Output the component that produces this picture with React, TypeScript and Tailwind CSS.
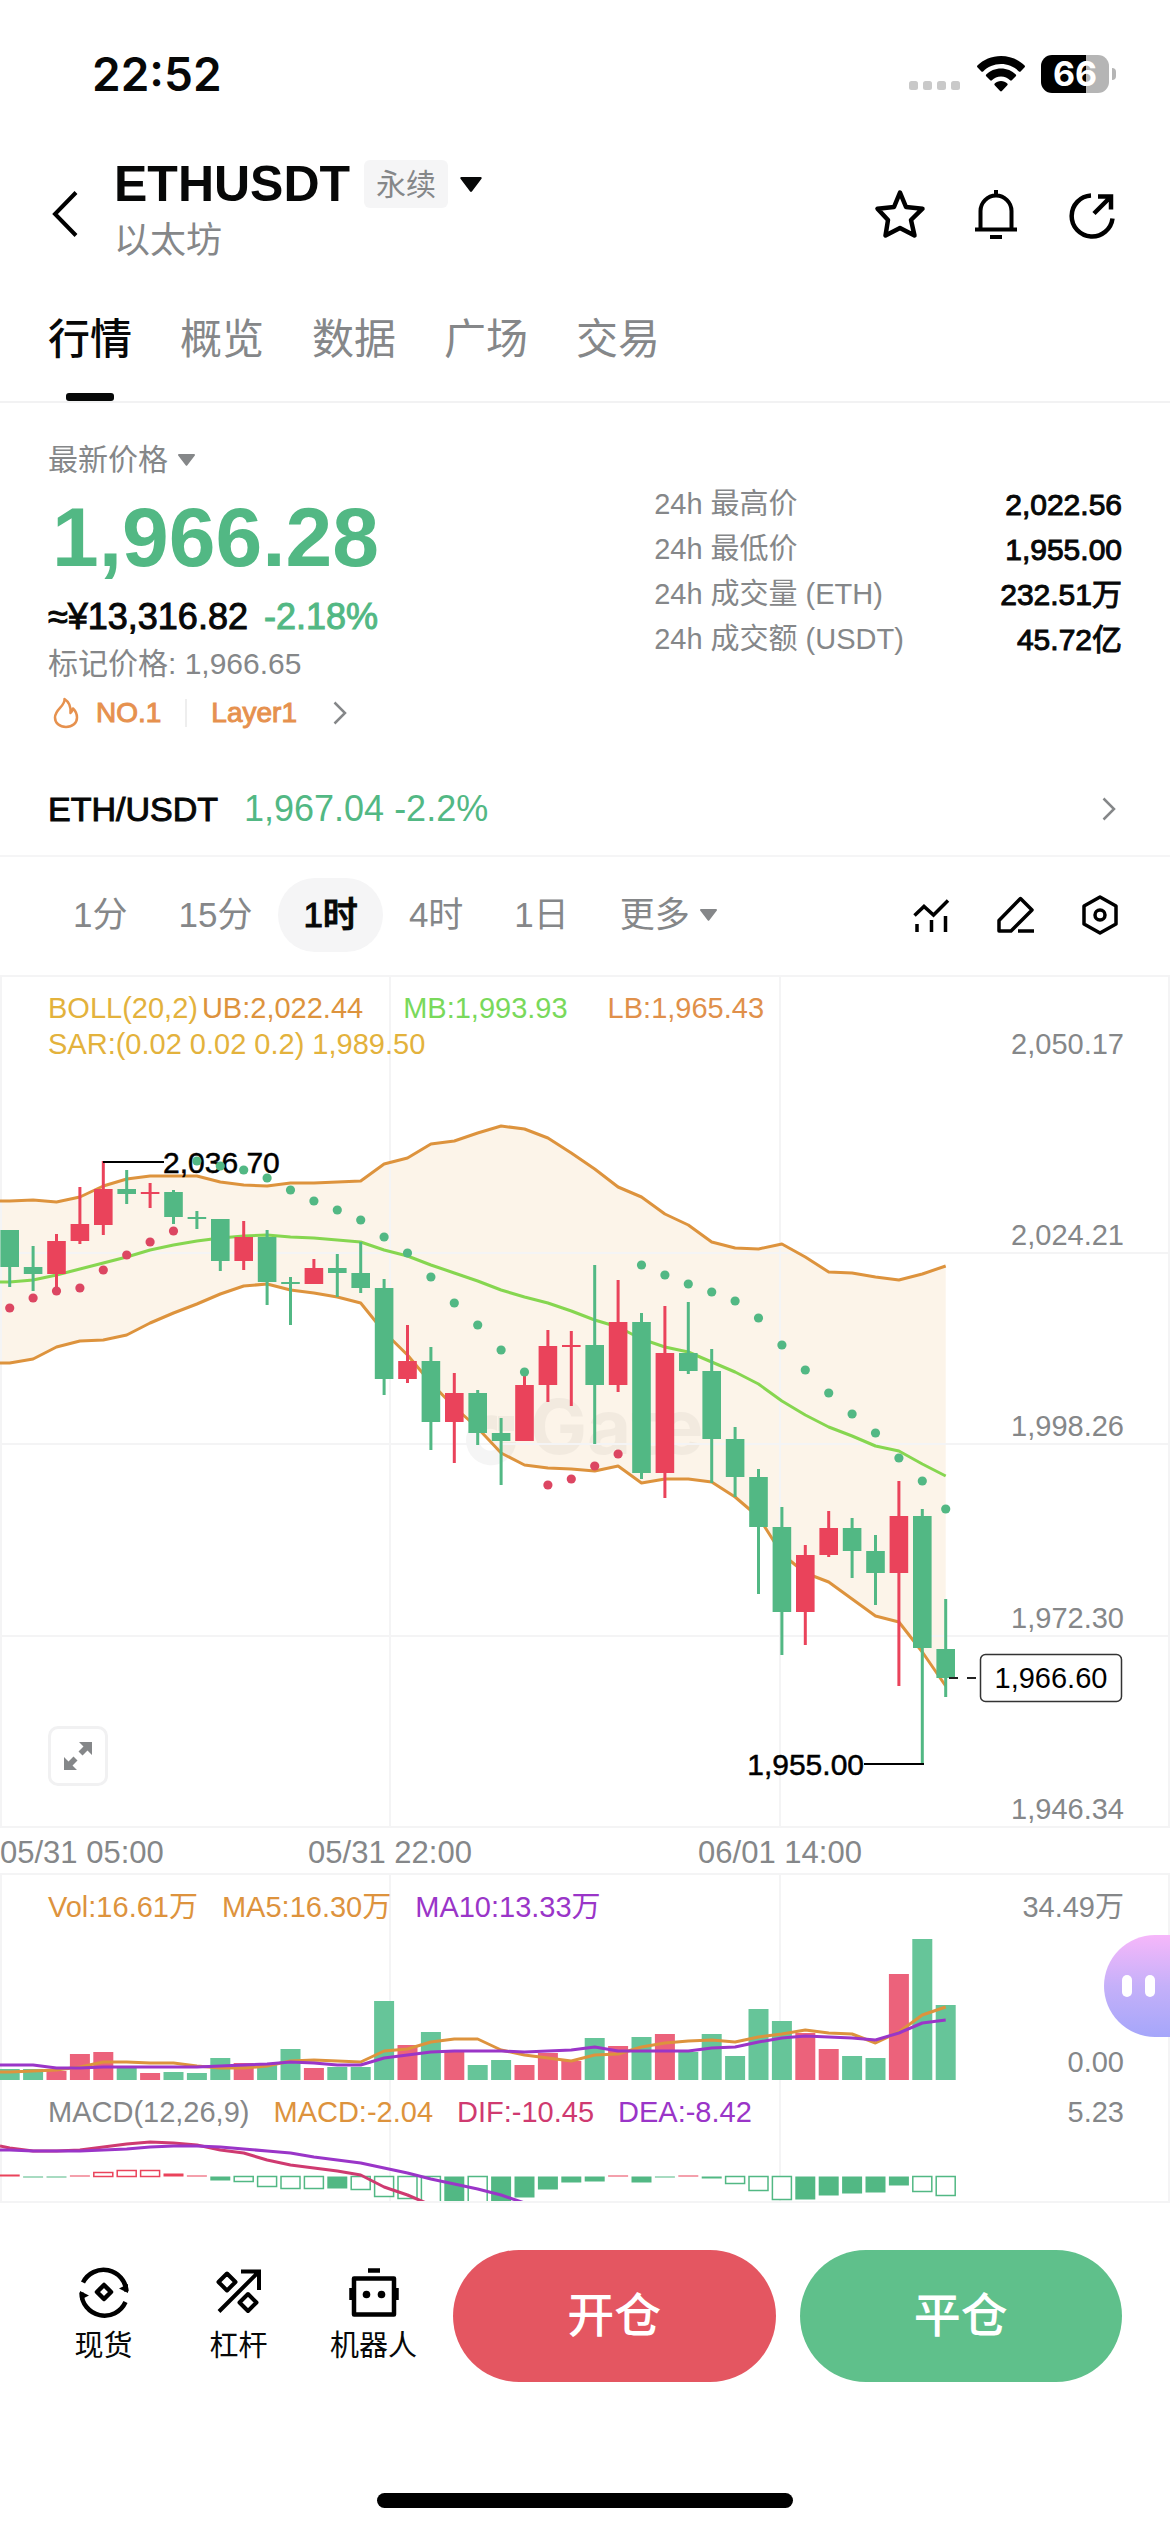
import React, { useState } from 'react';

const GREEN = '#52b884';
const RED = '#ea435b';
const ORANGE = '#dd933d';
const PURPLE = '#9a35c8';
const GRID = '#f4f4f5';

const STEP = 23.4;
const xAt = (i: number) => 9.7 + STEP * i;

type Side = 'g' | 'r';

// side, body top, body bottom, wick top, wick bottom
const candles: [Side, number, number, number, number][] = [
  ['g', 255, 292, 255, 312], ['g', 292, 299, 271, 316], ['r', 266, 299, 259, 316], ['r', 249, 266, 212, 269],
  ['r', 214, 250, 186, 260], ['g', 214, 219, 195, 229], ['r', 217, 219, 208, 233], ['g', 217, 242, 215, 249],
  ['g', 242, 244, 236, 254], ['g', 244, 286, 244, 296], ['r', 262, 286, 246, 295], ['g', 262, 307, 255, 330],
  ['g', 307, 309, 302, 350], ['r', 293, 309, 284, 309], ['g', 293, 298, 279, 322], ['g', 298, 313, 267, 318],
  ['g', 313, 404, 304, 420], ['r', 386, 404, 350, 408], ['g', 386, 447, 372, 475], ['r', 418, 447, 398, 488],
  ['g', 418, 458, 415, 470], ['g', 458, 466, 443, 510], ['r', 410, 466, 401, 466], ['r', 371, 410, 355, 427],
  ['r', 370, 372, 356, 431], ['g', 370, 410, 290, 469], ['r', 347, 410, 305, 417], ['g', 347, 498, 338, 504],
  ['r', 378, 498, 331, 523], ['g', 378, 396, 327, 399], ['g', 396, 464, 374, 508], ['g', 464, 502, 452, 522],
  ['g', 502, 552, 494, 619], ['g', 552, 637, 532, 680], ['r', 580, 637, 570, 670], ['r', 553, 580, 536, 582],
  ['g', 553, 576, 543, 603], ['g', 576, 598, 560, 630], ['r', 541, 598, 506, 711], ['g', 541, 673, 534, 788],
  ['g', 674, 703, 624, 722],
];

const bollUpper = [
  226, 225, 227, 222, 211, 204, 201, 201, 201, 207, 210, 211, 208, 208, 207, 206, 189, 183, 169, 166, 158,
  151, 154, 163, 178, 194, 212, 222, 239, 250, 267, 273, 274, 269, 282, 297, 298, 302, 305, 299, 291,
];
const bollMiddle = [
  307, 305, 300, 294, 288, 282, 275, 270, 266, 263, 261, 260, 262, 263, 265, 267, 275, 281, 290, 298, 306,
  315, 322, 328, 336, 345, 352, 364, 372, 377, 387, 397, 409, 426, 440, 452, 461, 471, 476, 489, 501,
];
const bollLower = [
  388, 384, 372, 366, 365, 360, 348, 338, 329, 319, 311, 309, 315, 318, 322, 328, 357, 380, 408, 432, 453,
  478, 490, 493, 494, 496, 491, 508, 504, 504, 507, 522, 542, 579, 598, 607, 624, 641, 647, 677, 711,
];
const sar = [
  333, 323, 316, 313, 295, 280, 267, 256, 186, 191, 195, 203, 215, 226, 235, 245, 262, 278, 302, 328, 350,
  375, 397, 510, 504, 491, 479, 290, 300, 309, 317, 326, 343, 370, 395, 418, 439, 458, 483, 506, 534,
];
const isSarRed = (i: number) => i < 8 || (i > 22 && i < 27);

const volumes = [
  11, 11, 9, 26, 28, 12, 7, 8, 7, 22, 17, 15, 31, 12, 13, 13, 79, 35, 48, 28, 15,
  20, 15, 27, 19, 42, 34, 43, 46, 28, 46, 24, 71, 59, 47, 31, 24, 22, 106, 141, 75,
];
const volMa5 = [
  197, 196, 195, 192, 187, 187, 188, 188, 191, 193, 193, 191, 186, 185, 186, 187, 176, 174, 167, 164, 164,
  175, 180, 183, 186, 180, 179, 172, 168, 166, 165, 167, 162, 159, 155, 158, 159, 168, 157, 140, 132,
];
const volMa10 = [
  190, 190, 193, 193, 192, 192, 192, 192, 192, 191, 190, 189, 187, 188, 190, 190, 183, 180, 177, 176, 176,
  176, 177, 176, 175, 172, 176, 176, 176, 176, 173, 172, 167, 163, 161, 162, 163, 165, 158, 148, 145,
];

// side, bar height, hollow
const macdBars: [Side, number, boolean][] = [
  ['r', 2, false], ['g', 1, false], ['g', 1, false], ['r', 1, false], ['r', 4, true], ['r', 6, true],
  ['r', 6, true], ['r', 3, false], ['r', 1, false], ['g', 4, false], ['g', 5, true], ['g', 10, true],
  ['g', 12, true], ['g', 12, true], ['g', 12, false], ['g', 13, true], ['g', 20, true], ['g', 22, true],
  ['g', 32, true], ['g', 32, false], ['g', 32, true], ['g', 32, false], ['g', 21, false], ['g', 13, false],
  ['g', 6, false], ['g', 5, false], ['r', 1, false], ['g', 6, false], ['g', 1, false], ['r', 1, false],
  ['g', 2, false], ['g', 7, true], ['g', 14, true], ['g', 23, true], ['g', 23, false], ['g', 19, false],
  ['g', 17, false], ['g', 16, false], ['g', 9, false], ['g', 15, true], ['g', 19, true],
];
const dif = [68, 71, 71, 70, 67, 64, 62, 63, 65, 70, 73, 80, 85, 88, 91, 95, 107, 115, 125];
const dea = [70, 71, 71, 71, 70, 69, 67, 66, 66, 67, 69, 71, 73, 77, 80, 83, 88, 93, 99, 104, 109, 115, 123];

const toPoints = (values: number[], first = values[0]) =>
  [`0,${first}`, ...values.map((y, i) => `${xAt(i)},${y}`)].join(' ');

const bandPoints = [
  toPoints(bollUpper),
  ...bollLower.map((y, i) => `${xAt(i)},${y}`).reverse(),
  `0,${bollLower[0]}`,
].join(' ');

const colorOf = (side: Side) => (side === 'g' ? GREEN : RED);

const GridColumns: React.FC<{ height: number }> = ({ height }) => (
  <g stroke={GRID} strokeWidth="2">
    {[1, 390, 780, 1169].map((x) => (
      <line key={x} x1={x} x2={x} y1="0" y2={height} />
    ))}
  </g>
);

const AxisLabel: React.FC<{ y: number; children: React.ReactNode }> = ({ y, children }) => (
  <text x="1124" y={y} textAnchor="end" dominantBaseline="central" className="fill-[#858789] text-[29px]">
    {children}
  </text>
);

const CaretDown: React.FC<{ className: string }> = ({ className }) => (
  <svg viewBox="0 0 20 14" className={className} fill="currentColor" aria-hidden="true">
    <path d="M1 0h18a1 1 0 0 1 .8 1.600l-8.800 11.700a1.300 1.300 0 0 1-2 0L.2 1.600A1 1 0 0 1 1 0z" />
  </svg>
);

const ChevronRight: React.FC = () => (
  <svg viewBox="0 0 14 24" className="h-6 w-[14px] text-[#858789]" fill="none" stroke="currentColor" strokeWidth="2.500" aria-hidden="true">
    <path d="M1.500 1.500 12 12 1.500 22.500" />
  </svg>
);

const PriceChart: React.FC = () => (
  <svg viewBox="0 0 1170 900" className="block h-auto w-full [grid-area:1/1]" role="img" aria-label="ETHUSDT K线">
    <polygon points={bandPoints} fill="#fcf4e9" />
    <g fill="#000" opacity="0.035">
      <path d="M497 441a25 25 0 1 0 19 26h-15a11 11 0 1 1-4-11z" />
      <rect x="498" y="441" width="16" height="15" />
      <text x="530" y="479" className="font-[Inter] text-[76px] font-bold">Gate</text>
    </g>
    <GridColumns height={852} />
    <g stroke={GRID} strokeWidth="2">
      {[1, 278, 469, 661, 852, 899].map((y) => (
        <line key={y} x1="0" x2="1170" y1={y} y2={y} />
      ))}
    </g>
    <g fill="none" strokeWidth="3" strokeLinejoin="round">
      <polyline points={toPoints(bollUpper)} stroke={ORANGE} />
      <polyline points={toPoints(bollLower)} stroke={ORANGE} />
      <polyline points={toPoints(bollMiddle)} stroke="#86d650" />
    </g>
    {candles.map(([side, top, bottom, high, low], i) => (
      <g key={i} fill={colorOf(side)}>
        <rect x={xAt(i) - 1.5} y={high} width="3" height={low - high} />
        <rect x={xAt(i) - 9.3} y={top} width="18.6" height={bottom - top} />
      </g>
    ))}

    {/* High / low marks */}
    <g stroke="#000" strokeWidth="2">
      <line x1="103" x2="164" y1="187" y2="187" />
      <line x1="864" x2="924" y1="789" y2="789" />
    </g>
    <g className="text-[30px]" stroke="#000" strokeWidth="0.5">
      <text x="163" y="187" dominantBaseline="central">2,036.70</text>
      <text x="864" y="789" textAnchor="end" dominantBaseline="central">1,955.00</text>
    </g>
    {sar.map((y, i) => (
      <circle key={i} cx={xAt(i)} cy={y} r="4.6" fill={isSarRed(i) ? '#dc4662' : GREEN} />
    ))}

    {/* Last price */}
    <line x1="949" x2="980" y1="703" y2="703" stroke="#222" strokeWidth="2" strokeDasharray="9 9" />
    <rect x="980.5" y="679.5" width="141" height="47" rx="5" fill="#fff" stroke="#333" strokeWidth="1.500" />
    <text x="1051" y="703" textAnchor="middle" dominantBaseline="central" className="text-[29px]">1,966.60</text>

    <AxisLabel y={69}>2,050.17</AxisLabel>
    <AxisLabel y={260}>2,024.21</AxisLabel>
    <AxisLabel y={451}>1,998.26</AxisLabel>
    <AxisLabel y={643}>1,972.30</AxisLabel>
    <AxisLabel y={834}>1,946.34</AxisLabel>

    <g className="fill-[#858789] text-[31px]">
      <text x="0" y="877" dominantBaseline="central">05/31 05:00</text>
      <text x="390" y="877" textAnchor="middle" dominantBaseline="central">05/31 22:00</text>
      <text x="780" y="877" textAnchor="middle" dominantBaseline="central">06/01 14:00</text>
    </g>
  </svg>
);

const VolumeChart: React.FC = () => (
  <svg viewBox="0 0 1170 205" className="block h-auto w-full [grid-area:1/1]" role="img" aria-label="成交量">
    <GridColumns height={205} />
    {volumes.map((h, i) => (
      <rect key={i} x={xAt(i) - 10} y={205 - h} width="20" height={h} fill={candles[i][0] === 'g' ? '#66c599' : '#ec627b'} />
    ))}
    <g fill="none" strokeWidth="3" strokeLinejoin="round">
      <polyline points={toPoints(volMa5)} stroke={ORANGE} />
      <polyline points={toPoints(volMa10)} stroke={PURPLE} />
    </g>
    <AxisLabel y={32}>34.49万</AxisLabel>
    <AxisLabel y={187}>0.00</AxisLabel>
  </svg>
);

const MacdChart: React.FC = () => (
  <svg viewBox="0 0 1170 123" className="block h-auto w-full [grid-area:1/1]" role="img" aria-label="MACD">
    <GridColumns height={123} />
    {macdBars.map(([side, h, hollow], i) => {
      const y = side === 'r' ? 96.5 - h : 96.5;
      return hollow ? (
        <rect key={i} x={xAt(i) - 9.5} y={y} width="19" height={h} fill="#fff" stroke={colorOf(side)} strokeWidth="1.500" />
      ) : (
        <rect key={i} x={xAt(i) - 10} y={y} width="20" height={h} fill={colorOf(side)} />
      );
    })}
    <g fill="none" strokeWidth="3" strokeLinejoin="round">
      <polyline points={toPoints(dif, 66)} stroke="#cf3a70" />
      <polyline points={toPoints(dea)} stroke={PURPLE} />
    </g>
    <line x1="0" x2="1170" y1="122" y2="122" stroke={GRID} strokeWidth="2" />
    <AxisLabel y={32}>5.23</AxisLabel>
  </svg>
);

const StatusBar: React.FC = () => (
  <div className="flex items-center justify-between pt-[50px] pr-[54px] pl-[92px] font-[Inter]">
    <span className="text-[46px] leading-[48px] font-semibold">22:52</span>
    <div className="flex items-center gap-4">
      <svg viewBox="0 0 52 10" className="mt-6 h-[10px] w-[52px]" fill="#c9c9c9" aria-hidden="true">
        {[0, 14, 28, 42].map((x) => (
          <rect key={x} x={x} y="0" width="9" height="9" rx="2.500" />
        ))}
      </svg>
      <svg viewBox="0 0 48 36" className="h-9 w-12" aria-hidden="true">
        <path d="M24 0C14.700 0 6.300 3.700.4 9.600c-.5.5-.5 1.200 0 1.700l4 4.100c.5.5 1.200.5 1.700 0C10.700 10.800 17 8 24 8s13.300 2.800 17.900 7.400c.5.5 1.200.5 1.700 0l4-4.100c.5-.5.5-1.200 0-1.700C41.700 3.700 33.300 0 24 0z" />
        <path d="M24 12.500c-5.800 0-11 2.300-14.800 6.100-.5.500-.5 1.200 0 1.700l4 4c.5.500 1.200.5 1.700 0 2.300-2.300 5.500-3.800 9.100-3.800s6.800 1.500 9.100 3.800c.5.500 1.200.5 1.700 0l4-4c.5-.5.5-1.200 0-1.700-3.800-3.800-9-6.100-14.800-6.100z" />
        <path d="M24 25c-2.500 0-4.700 1-6.300 2.600-.5.500-.5 1.200 0 1.700l5.400 5.800c.5.500 1.300.5 1.800 0l5.400-5.800c.5-.5.5-1.200 0-1.700C28.700 26 26.500 25 24 25z" />
      </svg>
      <div className="flex items-center gap-[3px]">
        <div className="flex h-[38px] w-[68px] items-center justify-center rounded-[11px] bg-[linear-gradient(90deg,#000_66%,#b5b5b5_66%)] text-[34px] leading-none font-bold text-white">
          66
        </div>
        <div className="h-3 w-[4px] rounded-r-full bg-[#b5b5b5]" />
      </div>
    </div>
  </div>
);

const Header: React.FC = () => (
  <header className="flex items-center pt-[62px] pr-[52px] pl-[50px]">
    <button type="button" aria-label="返回" className="flex h-[90px] w-[64px] items-center self-end">
      <svg viewBox="0 0 28 46" className="h-[46px] w-7" fill="none" stroke="#000" strokeWidth="4">
        <path d="M26 1.500 5 23l21 21.500" />
      </svg>
    </button>
    <div className="flex-1">
      <div className="flex h-12 items-center">
        <h1 className="text-[50px] leading-[48px] font-bold">ETHUSDT</h1>
        <span className="ml-[14px] flex h-12 items-center rounded-[6px] bg-[#f5f5f6] px-3 text-[30px] text-[#858789]">永续</span>
        <button type="button" aria-label="选择合约" className="ml-3">
          <CaretDown className="h-[15px] w-[22px]" />
        </button>
      </div>
      <p className="mt-[15px] text-[36px] leading-9 text-[#858789]">以太坊</p>
    </div>
    <div className="flex h-[90px] items-center gap-11 self-end">
      <button type="button" aria-label="收藏">
        <svg viewBox="0 0 52 52" className="size-[52px]" fill="none" stroke="#000" strokeWidth="4.500" strokeLinejoin="round">
          <path d="m26 4.500 6 14.500 16.500 1.700-11.500 11.300 3.500 15.500L26 40 11.500 47.500 14 32 3.500 20.700 20 19z" />
        </svg>
      </button>
      <button type="button" aria-label="提醒">
        <svg viewBox="0 0 52 52" className="size-[52px]" fill="none" stroke="#000" strokeWidth="4">
          <path d="M10.500 41V23a15.500 15.500 0 0 1 31 0v18M5 41.500h42M26 2v6M20 49h12" />
        </svg>
      </button>
      <button type="button" aria-label="分享">
        <svg viewBox="0 0 52 52" className="size-[52px]" fill="none" stroke="#000" strokeWidth="4.500">
          <path d="M25 7.500A20.500 20.500 0 1 0 46.500 30.500M28 25.500 44 9.500M32 8.500h13v13" />
        </svg>
      </button>
    </div>
  </header>
);

const stats = [
  { label: '24h 最高价', value: '2,022.56' },
  { label: '24h 最低价', value: '1,955.00' },
  { label: '24h 成交量 (ETH)', value: '232.51万' },
  { label: '24h 成交额 (USDT)', value: '45.72亿' },
];

const Summary: React.FC = () => (
  <section className="grid grid-cols-[9fr_7fr] px-12 pt-[39px]">
    <div>
      <button type="button" className="flex items-center gap-[10px] text-[30px] leading-9 text-[#858789]">
        最新价格
        <CaretDown className="h-[12px] w-[17px]" />
      </button>
      <p className="mt-[17px] pl-1 text-[84px] leading-[84px] font-bold text-[#52b884]">1,966.28</p>
      <p className="mt-[17px] flex gap-4 text-[36px] leading-[42px]">
        <span className="[-webkit-text-stroke:1px]">≈¥13,316.82</span>
        <span className="text-[#52b884] [-webkit-text-stroke:1px]">-2.18%</span>
      </p>
      <p className="mt-2 text-[30px] leading-9 text-[#858789]">标记价格: 1,966.65</p>
      <a href="#layer1" className="mt-[13px] flex items-center text-[28px] leading-9 text-[#e6914e] [-webkit-text-stroke:1px]">
        <svg viewBox="0 0 28 32" className="mr-4 ml-1 h-8 w-7" fill="none" stroke="currentColor" strokeWidth="2.500" strokeLinejoin="round" aria-hidden="true">
          <path d="M12.500 2C13.500 9 3 12 3 20.500 3 26 7.500 30 14 30s11-4 11-9.500c0-3.500-1.500-6.500-4-9-.5 2-1 3.500-2.500 4.500C19 9.500 16.500 4.500 12.500 2z" />
        </svg>
        NO.1
        <span className="mx-6 h-7 w-[2px] bg-[#eeeeee]" />
        Layer1
        <span className="ml-9">
          <ChevronRight />
        </span>
      </a>
    </div>
    <dl className="pt-10 pl-[2px] text-[29px] leading-[45px]">
      {stats.map((s) => (
        <div key={s.label} className="flex justify-between">
          <dt className="text-[#858789]">{s.label}</dt>
          <dd className="text-[30px] [-webkit-text-stroke:1px]">{s.value}</dd>
        </div>
      ))}
    </dl>
  </section>
);

const tabs = ['行情', '概览', '数据', '广场', '交易'];
const intervals = ['1分', '15分', '1时', '4时', '1日'];

const App: React.FC = () => {
  const [activeTab, setActiveTab] = useState('行情');
  const [activeInterval, setActiveInterval] = useState('1时');

  return (
    <div
      lang="zh-CN"
      className="min-h-screen overflow-x-hidden bg-white font-['Liberation_Sans','Noto_Sans_CJK_SC',sans-serif] text-[#070808]"
    >
      <StatusBar />
      <Header />

      {/* Tabs */}
      <nav className="flex gap-12 border-b-2 border-[#f2f2f3] px-12 pt-[57px]">
        {tabs.map((tab) => (
          <button
            key={tab}
            type="button"
            onClick={() => setActiveTab(tab)}
            className={`flex flex-col items-center text-[42px] leading-[48px] ${
              activeTab === tab ? 'font-medium text-[#070808]' : 'text-[#858789]'
            }`}
          >
            {tab}
            <span className={`mt-[29px] h-2 w-12 rounded-[3px] ${activeTab === tab ? 'bg-[#070808]' : 'bg-transparent'}`} />
          </button>
        ))}
      </nav>

      <Summary />

      {/* Spot pair */}
      <a href="#spot" className="flex items-center border-b-2 border-[#f5f5f6] px-12 pt-[56px] pb-6 leading-[44px]">
        <span className="text-[34px] [-webkit-text-stroke:1px]">ETH/USDT</span>
        <span className="ml-[26px] flex-1 text-[36px] text-[#52b884]">1,967.04 -2.2%</span>
        <span className="pr-[6px]">
          <ChevronRight />
        </span>
      </a>

      {/* Interval bar */}
      <div className="flex items-center justify-between px-12 pt-[21px] pb-[23px] text-[35px] text-[#858789]">
        <div className="flex items-center gap-px">
          {intervals.map((item) => (
            <button
              key={item}
              type="button"
              onClick={() => setActiveInterval(item)}
              className={`h-[74px] rounded-full px-[25px] ${
                activeInterval === item ? 'bg-[#f5f5f6] font-medium text-[#070808] [-webkit-text-stroke:1px]' : ''
              }`}
            >
              {item}
            </button>
          ))}
          <button type="button" className="flex h-[74px] items-center gap-[10px] px-[25px]">
            更多
            <CaretDown className="h-[12px] w-[17px]" />
          </button>
        </div>
        <div className="flex items-center gap-10">
          <button type="button" aria-label="指标">
            <svg viewBox="0 0 44 44" className="size-11" fill="none" stroke="#000" strokeWidth="3.500">
              <path d="M4.500 22.500 14 13.500 23.500 22 38 7.500M7 31v8M21.500 27v12M35.500 23v16" />
            </svg>
          </button>
          <button type="button" aria-label="画线">
            <svg viewBox="0 0 44 44" className="size-11" fill="none" stroke="#000" strokeWidth="3.500" strokeLinejoin="round">
              <path d="M5 38V27.500L26.500 5.500 38 17 17 38zM24 38h16" />
            </svg>
          </button>
          <button type="button" aria-label="设置">
            <svg viewBox="0 0 44 44" className="size-11" fill="none" stroke="#000" strokeWidth="3.500" strokeLinejoin="round">
              <path d="m22 4 16 9v18l-16 9-16-9V13z" />
              <circle cx="22" cy="22" r="5" />
            </svg>
          </button>
        </div>
      </div>

      {/* Charts */}
      <div className="relative grid">
        <PriceChart />
        <div className="px-12 pt-[15px] text-[29px] leading-9 [grid-area:1/1]">
          <div className="flex">
            <span className="mr-1 text-[#e3b23c]">BOLL(20,2)</span>
            <span className="text-[#dd933d]">UB:2,022.44</span>
            <span className="mx-10 text-[#79d95b]">MB:1,993.93</span>
            <span className="text-[#e0904a]">LB:1,965.43</span>
          </div>
          <div className="text-[#e3b23c]">SAR:(0.02 0.02 0.2) 1,989.50</div>
        </div>
        <button
          type="button"
          aria-label="全屏"
          className="absolute bottom-[89px] left-12 flex size-[60px] items-center justify-center rounded-[10px] border-3 border-[#f1f1f2] bg-white"
        >
          <svg viewBox="0 0 28 28" className="size-7" fill="#858789">
            <path d="M15 0h13v13l-4.500-4.500-5 5-4-4 5-5zM0 15l4.500 4.500 5-5 4 4-5 5L13 28H0z" />
          </svg>
        </button>
      </div>

      <div className="relative grid">
        <VolumeChart />
        <div className="flex gap-6 px-12 pt-[14px] text-[29px] leading-9 [grid-area:1/1]">
          <span className="text-[#dd933d]">Vol:16.61万</span>
          <span className="text-[#dd933d]">MA5:16.30万</span>
          <span className="text-[#9a35c8]">MA10:13.33万</span>
        </div>
        <button
          type="button"
          aria-label="智能助手"
          className="absolute top-[60px] right-0 flex h-[102px] w-[66px] items-center gap-[13px] rounded-l-full bg-linear-to-b from-[#f6b7fa] via-[#c5b0f9] to-[#a5a6fa] pl-[18px]"
        >
          <span className="h-[22px] w-[10px] rounded-full bg-white" />
          <span className="h-[22px] w-[10px] rounded-full bg-white" />
        </button>
      </div>

      <div className="grid">
        <MacdChart />
        <div className="flex gap-6 px-12 pt-[14px] text-[29px] leading-9 [grid-area:1/1]">
          <span className="text-[#858789]">MACD(12,26,9)</span>
          <span className="text-[#dd933d]">MACD:-2.04</span>
          <span className="text-[#cf3a70]">DIF:-10.45</span>
          <span className="text-[#9a35c8]">DEA:-8.42</span>
        </div>
      </div>

      {/* Bottom bar */}
      <div className="flex gap-6 pt-[47px] pr-12 pl-9 text-[29px] leading-[34px]">
        <div className="-mr-3 flex w-[405px] pt-4">
          <button type="button" className="flex flex-1 flex-col items-center gap-[11px]">
            <svg viewBox="0 0 52 52" className="size-[52px]" fill="none" stroke="#000" strokeWidth="4.500">
              <path d="M5 16.500A23 23 0 0 1 48.500 25.500M47.500 36A23 23 0 0 1 3.500 26.500" />
              <path d="M41 22.500l9 4.500V18zM11 29.500 2 25v9z" fill="#000" stroke="none" />
              <path d="m26 19 7 7-7 7-7-7z" strokeLinejoin="round" />
            </svg>
            现货
          </button>
          <button type="button" className="flex flex-1 flex-col items-center gap-[11px]">
            <svg viewBox="0 0 52 52" className="size-[52px]" fill="none" stroke="#000" strokeWidth="4" strokeLinejoin="round">
              <path d="M6 45.500 45 6.500M28 5.500h18V24" strokeLinejoin="miter" />
              <path d="m14 7.500 8.500 8.500-8.500 8.500L5.500 16zM35 28l8.500 8.500L35 45l-8.500-8.500z" />
            </svg>
            杠杆
          </button>
          <button type="button" className="flex flex-1 flex-col items-center gap-[11px]">
            <svg viewBox="0 0 52 52" className="size-[52px]" fill="none" stroke="#000" strokeWidth="4.500" strokeLinejoin="round">
              <path d="M6 12.500h40v36H6zM20 4.500h12M3.500 22v12M48.500 22v12" />
              <circle cx="18.500" cy="28.500" r="3.800" fill="#000" stroke="none" />
              <circle cx="33.500" cy="28.500" r="3.800" fill="#000" stroke="none" />
            </svg>
            机器人
          </button>
        </div>
        <button type="button" className="h-[132px] flex-1 rounded-full bg-[#e45661] text-[47px] font-medium text-white">
          开仓
        </button>
        <button type="button" className="h-[132px] flex-1 rounded-full bg-[#5fc08b] text-[47px] font-medium text-white">
          平仓
        </button>
      </div>

      <div className="flex justify-center pt-[111px] pb-[22px]">
        <div className="h-[15px] w-[416px] rounded-full bg-black" />
      </div>
    </div>
  );
};

export default App;
